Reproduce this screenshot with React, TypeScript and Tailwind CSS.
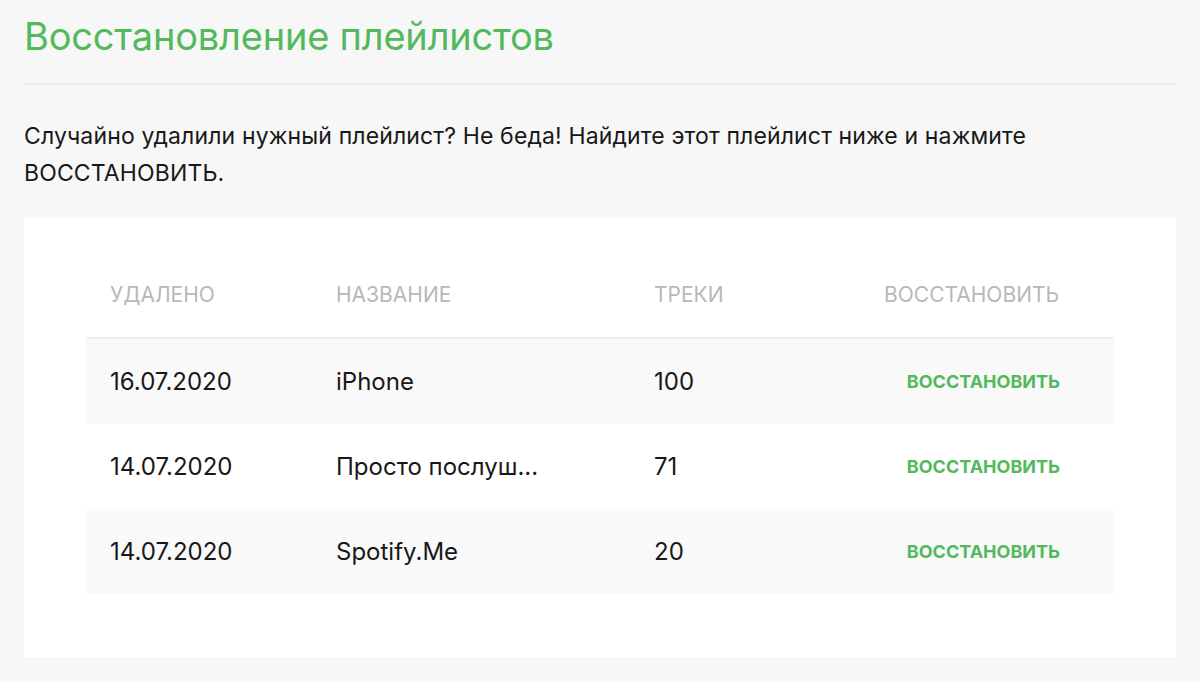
export default function App() {
  const rows = [
    { date: "16.07.2020", name: "iPhone", tracks: "100", bg: "bg-[#f9f9f9]" },
    { date: "14.07.2020", name: "Просто послуш...", tracks: "71", bg: "bg-white" },
    { date: "14.07.2020", name: "Spotify.Me", tracks: "20", bg: "bg-[#f9f9f9]" },
  ];
  return (
    <div className="min-h-[682px] w-[1200px] bg-[#f7f7f7] px-6 font-['Inter',sans-serif] text-[#181818]">
      <h1 className="h-[85px] border-b-2 border-[#ececec] pt-[14px] text-[38px] font-normal leading-[44px] tracking-[-0.2px] text-[#53b95d]">
        Восстановление плейлистов
      </h1>
      <p className="mt-[33px] text-[23px] leading-[37px] tracking-[0.14px] text-[#181818]">
        Случайно удалили нужный плейлист? Не беда! Найдите этот плейлист ниже и нажмите
        <br />
        ВОССТАНОВИТЬ.
      </p>
      <div className="mt-[26px] bg-white px-[62px] pb-[63px] pt-[62px]">
        <div className="grid h-[59px] grid-cols-[250px_318px_230px_1fr] border-b-2 border-[#ededed] text-[21px] leading-[30px] text-[#b8b8b8]">
          <div className="pl-6">УДАЛЕНО</div>
          <div>НАЗВАНИЕ</div>
          <div>ТРЕКИ</div>
          <div>ВОССТАНОВИТЬ</div>
        </div>
        {rows.map((r, i) => (
          <div
            key={i}
            className={`grid h-[85px] grid-cols-[250px_318px_230px_1fr] items-center text-[24px] ${r.bg}`}
          >
            <div className="pl-6">{r.date}</div>
            <div>{r.name}</div>
            <div>{r.tracks}</div>
            <div className="flex justify-end pr-[54px]">
              <span className="text-[18px] font-bold text-[#53b95d]">ВОССТАНОВИТЬ</span>
            </div>
          </div>
        ))}
      </div>
    </div>
  );
}
